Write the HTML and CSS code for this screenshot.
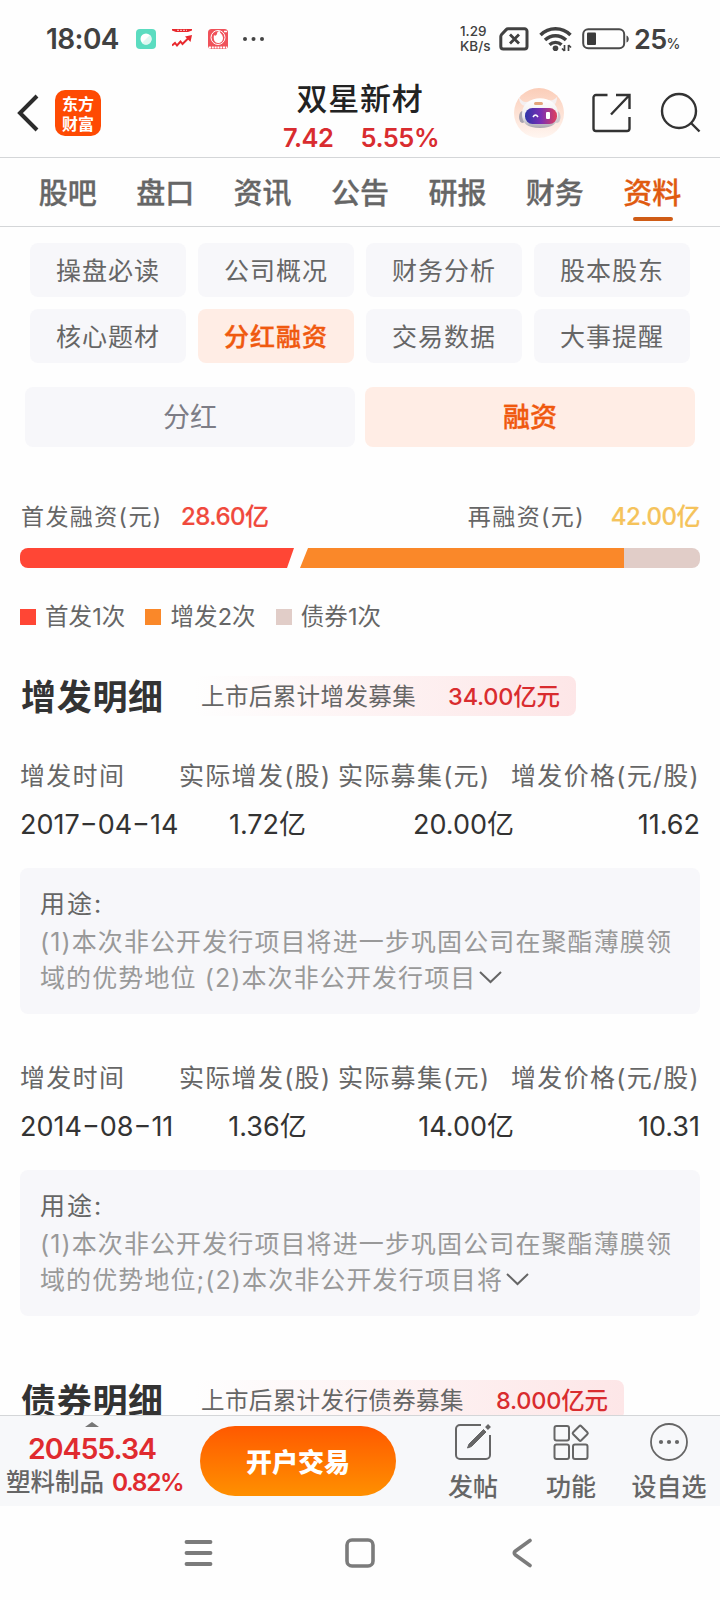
FILE: index.html
```html
<!DOCTYPE html>
<html lang="zh-CN">
  <head>
    <meta charset="UTF-8" />
    <meta name="viewport" content="width=device-width, initial-scale=1.0" />
    <title>双星新材 - 分红融资</title>
    <link rel="stylesheet" href="styles.css">
  </head>
  <body>
    <!-- 状态栏 -->
    <div class="status">
      <span class="time">18:04</span>
      <svg class="app-icon" width="20" height="20" viewBox="0 0 20 20">
        <rect width="20" height="20" rx="4" fill="#5bdcc0" />
        <circle cx="10" cy="10" r="5.5" fill="#fff" />
        <path d="M6 14 14 6a5.5 5.5 0 0 1-8 8z" fill="#dff7f1" />
      </svg>
      <svg class="app-icon" width="20" height="20" viewBox="0 0 20 20">
        <path d="M0 0h20v1.500L16 3H4L0 1.500z" fill="#e8282d" />
        <path d="M5 1.300h10" stroke="#fff" stroke-width="0.8" stroke-dasharray="2 1" />
        <path d="M0 16.500 3 14l2 2.500 3.500-4 2 2.500 6-6" fill="none" stroke="#e8282d" stroke-width="2" />
        <path d="M13 7.500 20 6l-1.500 7z" fill="#e8282d" />
      </svg>
      <svg class="app-icon" width="20" height="20" viewBox="0 0 20 20">
        <rect width="20" height="20" rx="3.500" fill="#f0525a" />
        <circle cx="10" cy="8.500" r="7" fill="none" stroke="#fff" stroke-width="1" />
        <path d="M6 6c1 1 2 1 3-1 0-2 1-3 3-3-1 2 3 3 3 7 0 3-2 5-5 5s-5-3-4-8z" fill="#fff" />
        <path d="M16 2.500h3" stroke="#fff" stroke-width="1.500" />
        <path d="M1 18.500h18" stroke="#fff" stroke-width="2" stroke-dasharray="2 .8" />
      </svg>
      <svg class="more" width="24" height="6" viewBox="0 0 24 6" fill="#444">
        <circle cx="3" cy="3" r="2" />
        <circle cx="11.500" cy="3" r="2" />
        <circle cx="20" cy="3" r="2" />
      </svg>
      <span class="speed">1.29<br>KB/s</span>
      <svg class="sim" width="30" height="24" viewBox="0 0 30 24" fill="none" stroke="#414141">
        <path d="M9 1.800h16.500a2.500 2.500 0 0 1 2.500 2.500v15.200a2.500 2.500 0 0 1-2.500 2.500H4.300a2.500 2.500 0 0 1-2.500-2.500V9.500a3 3 0 0 1 .8-2l4.600-4.900a2.500 2.500 0 0 1 1.800-.8z" stroke-width="3" />
        <path d="m11 7.500 9 9m0-9-9 9" stroke-width="2.800" />
      </svg>
      <svg class="wifi" width="34" height="26" viewBox="0 0 34 26" fill="none" stroke="#414141" stroke-width="3.400">
        <path d="M1.500 9a21 21 0 0 1 30 0" />
        <path d="M6 14a15 15 0 0 1 21 0" />
        <path d="M10.500 18.700a8.800 8.800 0 0 1 12 0" />
        <circle cx="16.500" cy="22.300" r="2.800" fill="#414141" stroke="none" />
        <path d="M25.500 19v6M29.500 19v6M23 22.500l2.500 2.500M32 21.500 29.500 19" stroke-width="1.700" />
      </svg>
      <svg class="battery" width="48" height="22" viewBox="0 0 48 22">
        <rect x="1.200" y="1.200" width="41" height="19" rx="5" fill="none" stroke="#4a4a4a" stroke-width="2" />
        <rect x="5" y="4.500" width="9" height="12.500" rx="1" fill="#3b3b3b" />
        <path d="M44.500 7.500c3 1 3 6 0 7z" fill="#4a4a4a" />
      </svg>
      <span class="level">25</span><span class="percent">%</span>
    </div>

    <!-- 标题栏 -->
    <div class="header">
      <svg class="back" width="24" height="40" viewBox="0 0 24 40">
        <path d="M21 3 4 20l17 17" fill="none" stroke="#2c2c2c" stroke-width="4" />
      </svg>
      <div class="logo">东方<br>财富</div>
      <div class="stock">
        <div class="stock-name">双星新材</div>
        <div class="stock-price"><span>7.42</span><span>5.55%</span></div>
      </div>
      <svg class="robot" width="50" height="50" viewBox="0 0 50 50">
        <defs>
          <linearGradient id="halo" x1="0" y1="0" x2="0" y2="1">
            <stop offset="0" stop-color="#fbcdb8" />
            <stop offset="1" stop-color="#fff6f1" />
          </linearGradient>
          <linearGradient id="visor" x1="0" y1="0" x2="1" y2="0">
            <stop offset="0" stop-color="#2e35a8" />
            <stop offset=".5" stop-color="#7a2fb4" />
            <stop offset="1" stop-color="#e0405c" />
          </linearGradient>
          <linearGradient id="head" x1="0" y1="0" x2="0" y2="1">
            <stop offset="0" stop-color="#fff" />
            <stop offset=".6" stop-color="#eeecef" />
            <stop offset="1" stop-color="#a9a6ae" />
          </linearGradient>
        </defs>
        <circle cx="25" cy="25" r="25" fill="url(#halo)" />
        <path d="M5 9c0 5 2 8 6 9l5-5c-5 2-8 1-11-4zM43 9c0 4-1 7-4 9l-5-6c4 1 6 0 9-3z" fill="#f4eff0" />
        <ellipse cx="8.500" cy="29" rx="3.500" ry="6" fill="#aaa6b0" />
        <ellipse cx="43" cy="29" rx="3.500" ry="6" fill="#cfc9ce" />
        <path d="M8 26C8 5 44 5 44 26c0 9-5 14-18 14S8 35 8 26z" fill="url(#head)" />
        <rect x="20" y="14" width="9" height="3" rx="1.500" fill="#e3a57c" />
        <rect x="11" y="20" width="32" height="16" rx="7.500" fill="url(#visor)" />
        <path d="M19 29q2.500-4 5 0" fill="none" stroke="#fff" stroke-width="1.500" />
        <rect x="32" y="24" width="4" height="7" rx="1" fill="#fff" />
      </svg>
      <svg class="share" width="40" height="40" viewBox="0 0 40 40" fill="none" stroke="#333" stroke-width="2.400">
        <path d="M15.500 2H4a2.500 2.500 0 0 0-2.500 2.500v31A2.500 2.500 0 0 0 4 38h31a2.500 2.500 0 0 0 2.500-2.500V24" />
        <path d="M24 2h13.500v14M37.500 2 19 21.500" />
      </svg>
      <svg class="search" width="42" height="42" viewBox="0 0 42 42" fill="none" stroke="#333" stroke-width="2.400">
        <circle cx="19" cy="19" r="17" />
        <path d="m31 31 8.500 8.500" />
      </svg>
    </div>

    <!-- 主导航 -->
    <div class="tabs">
      <span>股吧</span>
      <span>盘口</span>
      <span>资讯</span>
      <span>公告</span>
      <span>研报</span>
      <span>财务</span>
      <span class="active">资料</span>
    </div>

    <div class="content">
      <div class="chips">
        <span>操盘必读</span>
        <span>公司概况</span>
        <span>财务分析</span>
        <span>股本股东</span>
        <span>核心题材</span>
        <span class="active">分红融资</span>
        <span>交易数据</span>
        <span>大事提醒</span>
      </div>
      <div class="switch">
        <span>分红</span>
        <span class="active">融资</span>
      </div>

      <!-- 融资汇总 -->
      <div class="total">
        <span class="total-label">首发融资(元)</span>
        <span class="total-value red">28.60亿</span>
        <span class="total-label refinance">再融资(元)</span>
        <span class="total-value yellow">42.00亿</span>
      </div>
      <div class="bar">
        <div class="bar-ipo"></div>
        <div class="bar-add"></div>
        <div class="bar-bond"></div>
      </div>
      <div class="legend">
        <span><i class="ipo"></i>首发1次</span>
        <span><i class="add"></i>增发2次</span>
        <span><i class="bond"></i>债券1次</span>
      </div>

      <!-- 增发明细 -->
      <div class="section-title">
        <h2>增发明细</h2>
        <div class="badge">上市后累计增发募集<b>34.00亿元</b></div>
      </div>
      <div class="record">
        <div class="row row-head">
          <span>增发时间</span>
          <span>实际增发(股)</span>
          <span>实际募集(元)</span>
          <span>增发价格(元/股)</span>
        </div>
        <div class="row row-value">
          <span>2017−04−14</span>
          <span>1.72亿</span>
          <span>20.00亿</span>
          <span>11.62</span>
        </div>
        <div class="usage">
          <div class="usage-title">用途:</div>
          <div class="usage-text">(1)本次非公开发行项目将进一步巩固公司在聚酯薄膜领<br>域的优势地位 (2)本次非公开发行项目<svg width="24" height="14" viewBox="0 0 24 14"><path d="m2 2 10.500 10L23 2" fill="none" stroke="#666" stroke-width="2" /></svg></div>
        </div>
      </div>
      <div class="record">
        <div class="row row-head">
          <span>增发时间</span>
          <span>实际增发(股)</span>
          <span>实际募集(元)</span>
          <span>增发价格(元/股)</span>
        </div>
        <div class="row row-value">
          <span>2014−08−11</span>
          <span>1.36亿</span>
          <span>14.00亿</span>
          <span>10.31</span>
        </div>
        <div class="usage">
          <div class="usage-title">用途:</div>
          <div class="usage-text">(1)本次非公开发行项目将进一步巩固公司在聚酯薄膜领<br>域的优势地位;(2)本次非公开发行项目将<svg width="24" height="14" viewBox="0 0 24 14"><path d="m2 2 10.500 10L23 2" fill="none" stroke="#666" stroke-width="2" /></svg></div>
        </div>
      </div>

      <!-- 债券明细 -->
      <div class="section-title">
        <h2>债券明细</h2>
        <div class="badge">上市后累计发行债券募集<b>8.000亿元</b></div>
      </div>
    </div>

    <!-- 底部操作栏 -->
    <div class="toolbar">
      <div class="index">
        <svg width="14" height="5" viewBox="0 0 14 5"><path d="M0 5 7 0l7 5z" fill="#777" /></svg>
        <div class="index-value">20455.34</div>
        <div class="index-name">塑料制品<b>0.82%</b></div>
      </div>
      <div class="trade">开户交易</div>
      <div class="tool">
        <svg width="38" height="38" viewBox="0 0 38 38" fill="none" stroke="#666" stroke-width="2">
          <path d="M27 2H6a4 4 0 0 0-4 4v26a4 4 0 0 0 4 4h26a4 4 0 0 0 4-4V12" />
          <path d="m13.500 25 1.500-4L29.500 6.500l2.500 2.500L17.500 23.500z" fill="#666" stroke-width="1" />
          <path d="m32.500 5.500 3-3" stroke-width="4" />
        </svg>
        <span>发帖</span>
      </div>
      <div class="tool">
        <svg width="38" height="38" viewBox="0 0 38 38" fill="none" stroke="#666" stroke-width="2">
          <rect x="2.500" y="3" width="14.500" height="14.500" rx="2" />
          <rect x="2.500" y="21.500" width="14.500" height="14.500" rx="2" />
          <rect x="21" y="21.500" width="14.500" height="14.500" rx="2" />
          <rect x="22.500" y="4.500" width="11.500" height="11.500" rx="1.500" transform="rotate(45 28.250 10.250)" />
        </svg>
        <span>功能</span>
      </div>
      <div class="tool">
        <svg width="38" height="38" viewBox="0 0 38 38">
          <circle cx="19" cy="19" r="18" fill="none" stroke="#666" stroke-width="1.800" />
          <g fill="#666">
            <circle cx="11" cy="19" r="2.100" />
            <circle cx="19" cy="19" r="2.100" />
            <circle cx="27" cy="19" r="2.100" />
          </g>
        </svg>
        <span>设自选</span>
      </div>
    </div>

    <!-- 系统导航键 -->
    <div class="sysnav">
      <svg width="30" height="30" viewBox="0 0 30 30" fill="none" stroke="#7b7b7b" stroke-width="3.800" stroke-linecap="round">
        <path d="M2.500 4h24M2.500 15h24M2.500 26h24" />
      </svg>
      <svg width="30" height="30" viewBox="0 0 30 30" fill="none" stroke="#7b7b7b" stroke-width="3.600">
        <rect x="2" y="2" width="26" height="26" rx="5" />
      </svg>
      <svg width="30" height="30" viewBox="0 0 30 30" fill="none" stroke="#7b7b7b" stroke-width="3.600" stroke-linecap="round">
        <path d="M24 2.500 9.500 13q-2.500 2 0 4L24 27.500" />
      </svg>
    </div>
  </body>
</html>
```
FILE: styles.css
```css
* {
  box-sizing: border-box;
}
body {
  margin: 0;
  width: 720px;
  height: 1600px;
  overflow: hidden;
  display: flex;
  flex-direction: column;
  background: #fefefe;
  color: #666;
  font-family: "Inter", "Noto Sans CJK SC", sans-serif;
  white-space: nowrap;
}
svg {
  display: block;
  flex: none;
}

/* 状态栏 */
.status {
  height: 78px;
  flex: none;
  display: flex;
  align-items: center;
  padding-left: 46px;
  color: #414141;
}
.time {
  width: 90px;
  font-size: 28px;
  font-weight: 600;
  letter-spacing: -0.6px;
}
.app-icon {
  margin-right: 16px;
}
.more {
  margin-left: -2px;
}
.speed {
  width: 39px;
  margin-left: 194px;
  font-size: 13.5px;
  font-weight: 500;
  line-height: 15px;
}
.wifi {
  margin-left: 10px;
}
.battery {
  margin-left: 9px;
}
.level {
  margin-left: 4px;
  font-size: 27px;
  font-weight: 600;
  letter-spacing: -0.6px;
}
.percent {
  margin-top: 8px;
  font-size: 14px;
  font-weight: 500;
}

/* 标题栏 */
.header {
  height: 80px;
  flex: none;
  display: flex;
  align-items: flex-start;
  border-bottom: 1px solid #d4d6d8;
}
.back {
  margin: 15px 0 0 16px;
}
.logo {
  width: 46px;
  height: 46px;
  margin: 12px 0 0 15px;
  padding-top: 3px;
  border-radius: 10px;
  background: #fe4a03;
  color: #fff;
  font-family: "Noto Sans CJK SC", sans-serif;
  font-size: 16px;
  font-weight: 700;
  line-height: 20px;
  text-align: center;
}
.stock {
  width: 200px;
  margin-left: 159px;
  text-align: center;
}
.stock-name {
  color: #222;
  font-size: 31px;
  font-weight: 500;
  line-height: 41px;
  letter-spacing: 0.8px;
}
.stock-price {
  display: flex;
  justify-content: center;
  gap: 27px;
  padding-left: 2px;
  color: #d92c2f;
  font-size: 25.5px;
  font-weight: 600;
  line-height: 37px;
  letter-spacing: -0.5px;
}
.robot {
  margin: 10px 0 0 54px;
}
.share {
  margin: 15px 0 0 28px;
}
.search {
  margin: 14px 0 0 28px;
}

/* 主导航 */
.tabs {
  height: 69px;
  flex: none;
  display: grid;
  grid-template-columns: repeat(7, 1fr);
  padding: 0 19px;
  border-bottom: 1px solid #d4d6d8;
  font-size: 29px;
  font-weight: 500;
  line-height: 71px;
  text-align: center;
  -webkit-text-stroke: 0.3px;
}
.tabs .active {
  position: relative;
  height: 68px;
  color: #e05a10;
}
.tabs .active::after {
  content: "";
  position: absolute;
  left: 29px;
  bottom: 5px;
  width: 40px;
  height: 4px;
  border-radius: 2px;
  background: #cf5c16;
}

.content {
  height: 1188px;
  flex: none;
  overflow: hidden;
  padding: 16px 20px 0;
}
.chips {
  display: grid;
  grid-template-columns: repeat(4, 156px);
  gap: 12px;
  padding-left: 10px;
}
.chips span {
  height: 54px;
  border-radius: 8px;
  background: #f7f7fa;
  font-size: 25px;
  line-height: 56px;
  letter-spacing: 1px;
  text-align: center;
}
.switch {
  display: flex;
  gap: 10px;
  padding: 0 5px;
  margin-top: 24px;
}
.switch span {
  flex: 1;
  height: 60px;
  border-radius: 8px;
  background: #f7f7fa;
  color: #7d7d86;
  font-size: 27px;
  line-height: 62px;
  text-align: center;
}
.chips .active,
.switch .active {
  background: #ffede5;
  color: #f0590f;
  font-weight: 500;
  -webkit-text-stroke: 0.4px;
}

/* 融资汇总 */
.total {
  display: flex;
  height: 36px;
  margin-top: 52px;
  font-size: 24px;
  line-height: 36px;
}
.total-label {
  width: 161px;
  padding-left: 1px;
  font-size: 23px;
  letter-spacing: 1.4px;
}
.total-value {
  font-weight: 500;
  letter-spacing: -0.5px;
  -webkit-text-stroke: 0.2px;
}
.refinance {
  width: 144px;
  margin-left: auto;
}
.red {
  color: #f0493c;
}
.yellow {
  color: #f5c35b;
}
.bar {
  display: flex;
  height: 20px;
  margin-top: 13px;
  border-radius: 8px;
  overflow: hidden;
}
.bar-ipo {
  width: 274px;
  background: #ff4635;
  clip-path: polygon(0 0, 100% 0, 267px 100%, 0 100%);
}
.bar-add {
  width: 324px;
  margin-left: 6px;
  background: #fa8829;
  clip-path: polygon(8px 0, 100% 0, 100% 100%, 0 100%);
}
.bar-bond {
  flex: 1;
  background: #e1cdc8;
}
.legend {
  display: flex;
  gap: 20px;
  margin-top: 31px;
  font-size: 23.5px;
  line-height: 36px;
  letter-spacing: 0.1px;
}
.legend span {
  display: flex;
  align-items: center;
}
.legend i {
  width: 16px;
  height: 16px;
  margin-right: 9px;
}
.ipo {
  background: #ff4635;
}
.add {
  background: #fa8829;
}
.bond {
  background: #e1cdc8;
}

/* 明细标题 */
.section-title {
  display: flex;
  height: 40px;
  margin-top: 41px;
}
.section-title h2 {
  width: 174px;
  margin: 0;
  padding-left: 1px;
  color: #333;
  font-size: 35px;
  font-weight: 700;
  line-height: 42px;
  letter-spacing: 0.7px;
}
.badge {
  padding: 0 16px 0 7px;
  border-radius: 8px;
  background: linear-gradient(90deg, #fefefe, #fde6e7);
  font-size: 23.5px;
  line-height: 41px;
  letter-spacing: 0.4px;
}
.badge b {
  margin-left: 32px;
  color: #d92c2f;
  font-weight: 500;
  letter-spacing: -0.2px;
}

/* 增发记录 */
.record {
  margin-top: 42px;
}
.row {
  display: grid;
  grid-template-columns: 159px 159px 171px 1fr;
  line-height: 36px;
}
.row span:last-child {
  text-align: right;
}
.row-head {
  font-size: 25px;
  letter-spacing: 1.3px;
}
.row-value {
  grid-template-columns: 159px 177px 158px 1fr;
  margin-top: 12px;
  color: #333;
  font-size: 27px;
  line-height: 38px;
}
.row-value span:nth-child(2) {
  text-align: center;
}
.row-value span:nth-child(3) {
  text-align: right;
}
.usage {
  height: 146px;
  margin-top: 24px;
  padding: 18px 20px 0;
  border-radius: 8px;
  background: #f7f7fa;
  font-size: 25px;
  line-height: 36px;
  letter-spacing: 1.1px;
}
.usage-title {
  letter-spacing: 2px;
}
.usage-text {
  margin-top: 2px;
  color: #999;
}
.usage svg {
  display: inline-block;
  margin-left: 2px;
  vertical-align: 3px;
}
.record + .record {
  margin-top: 46px;
}
.record + .section-title {
  margin-top: 64px;
}

/* 底部操作栏 */
.toolbar {
  height: 91px;
  flex: none;
  display: flex;
  border-top: 1px solid #d4d6d8;
  background: #f7f8fa;
}
.index {
  width: 200px;
  padding-top: 6px;
}
.index svg {
  margin-left: 85px;
}
.index-value {
  width: 184px;
  color: #e02b2f;
  font-size: 28.5px;
  font-weight: 600;
  line-height: 44px;
  letter-spacing: -1px;
  text-align: center;
}
.index-name {
  padding-left: 6px;
  font-size: 24.5px;
  font-weight: 500;
  line-height: 22px;
}
.index-name b {
  margin-left: 8px;
  color: #e02b2f;
  font-weight: 600;
  letter-spacing: -1.4px;
}
.trade {
  width: 196px;
  height: 70px;
  margin: 10px 28px 0 0;
  border-radius: 35px;
  background: linear-gradient(#ff5900, #ff9000);
  color: #fff;
  font-size: 26px;
  font-weight: 900;
  line-height: 73px;
  text-align: center;
}
.tool {
  width: 98px;
  padding-top: 7px;
  font-size: 25px;
  font-weight: 500;
  line-height: 52px;
  text-align: center;
}
.tool svg {
  margin: 0 auto;
}

/* 系统导航键 */
.sysnav {
  flex: 1;
  display: flex;
  justify-content: center;
  align-items: center;
  gap: 131px;
}
```
